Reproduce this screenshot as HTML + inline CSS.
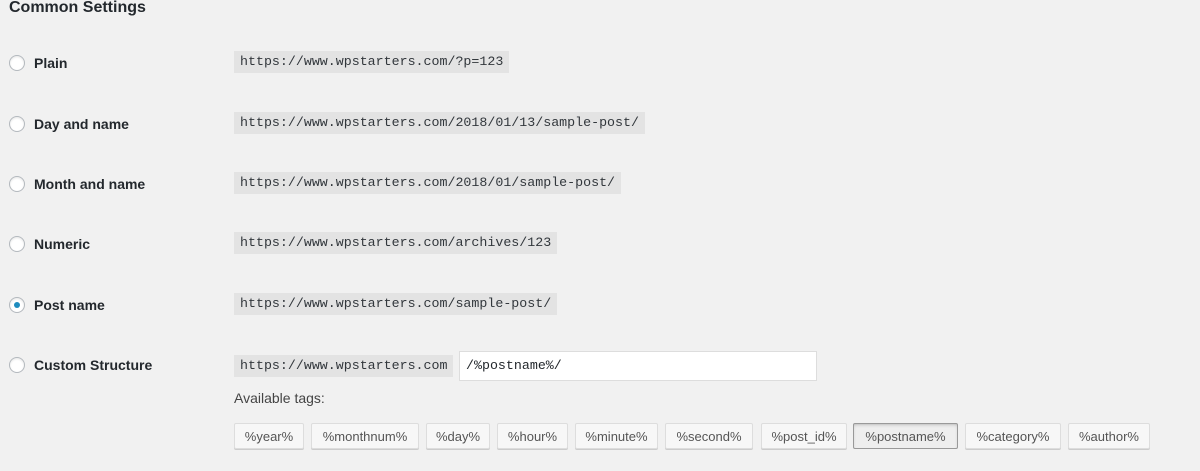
<!DOCTYPE html>
<html><head><style>
body{margin:0;width:1200px;height:471px;background:#f1f1f1;font-family:"Liberation Sans",sans-serif;color:#23282d;position:relative;overflow:hidden}
.t{position:absolute;left:9px;top:-1px;font-size:16px;font-weight:600;}
.r{position:absolute;left:9px;width:14px;height:14px;border:1px solid #b4b9be;border-radius:50%;background:#fff;box-shadow:inset 0 1px 2px rgba(0,0,0,.1)}
.r.on::after{content:"";position:absolute;left:4px;top:4px;width:6px;height:6px;border-radius:50%;background:#1e8cbe}
.l{position:absolute;left:34px;font-size:14px;font-weight:600;color:#23282d}
.c{position:absolute;left:234px;height:22px;line-height:22px;padding:0 6px;background:#e3e3e3;font-family:"Liberation Mono",monospace;font-size:13.3px;color:#32373c}
.in{position:absolute;left:459px;top:351px;width:350px;height:28px;background:#fff;border:1px solid #ddd;font-family:"Liberation Mono",monospace;font-size:13.3px;line-height:28px;padding-left:6px;box-sizing:content-box}
.av{position:absolute;left:234px;top:390px;font-size:14px;color:#444}
.b{position:absolute;top:423px;height:26px;line-height:26px;background:#f7f7f7;border:1px solid #ddd;border-radius:2px;box-shadow:0 1px 0 #ccc;font-size:13px;color:#555;text-align:center;box-sizing:border-box}
.b.on{background:#eee;border-color:#999;box-shadow:inset 0 2px 5px -3px rgba(0,0,0,.5)}
</style></head><body>
<div class="t">Common Settings</div>
<div class="r" style="top:55px"></div><div class="l" style="top:55px">Plain</div><div class="c" style="top:51px">https://www.wpstarters.com/?p=123</div>
<div class="r" style="top:116px"></div><div class="l" style="top:116px">Day and name</div><div class="c" style="top:112px">https://www.wpstarters.com/2018/01/13/sample-post/</div>
<div class="r" style="top:176px"></div><div class="l" style="top:176px">Month and name</div><div class="c" style="top:172px">https://www.wpstarters.com/2018/01/sample-post/</div>
<div class="r" style="top:236px"></div><div class="l" style="top:236px">Numeric</div><div class="c" style="top:232px">https://www.wpstarters.com/archives/123</div>
<div class="r on" style="top:297px"></div><div class="l" style="top:297px">Post name</div><div class="c" style="top:293px">https://www.wpstarters.com/sample-post/</div>
<div class="r" style="top:357px"></div><div class="l" style="top:357px">Custom Structure</div><div class="c" style="top:355px">https://www.wpstarters.com</div>
<div class="in">/%postname%/</div>
<div class="av">Available tags:</div>
<div class="b" style="left:234px;width:70px">%year%</div>
<div class="b" style="left:311px;width:108px">%monthnum%</div>
<div class="b" style="left:426px;width:64px">%day%</div>
<div class="b" style="left:497px;width:71px">%hour%</div>
<div class="b" style="left:575px;width:83px">%minute%</div>
<div class="b" style="left:665px;width:88px">%second%</div>
<div class="b" style="left:761px;width:86px">%post_id%</div>
<div class="b on" style="left:853px;width:105px">%postname%</div>
<div class="b" style="left:965px;width:96px">%category%</div>
<div class="b" style="left:1068px;width:82px">%author%</div>
</body></html>
